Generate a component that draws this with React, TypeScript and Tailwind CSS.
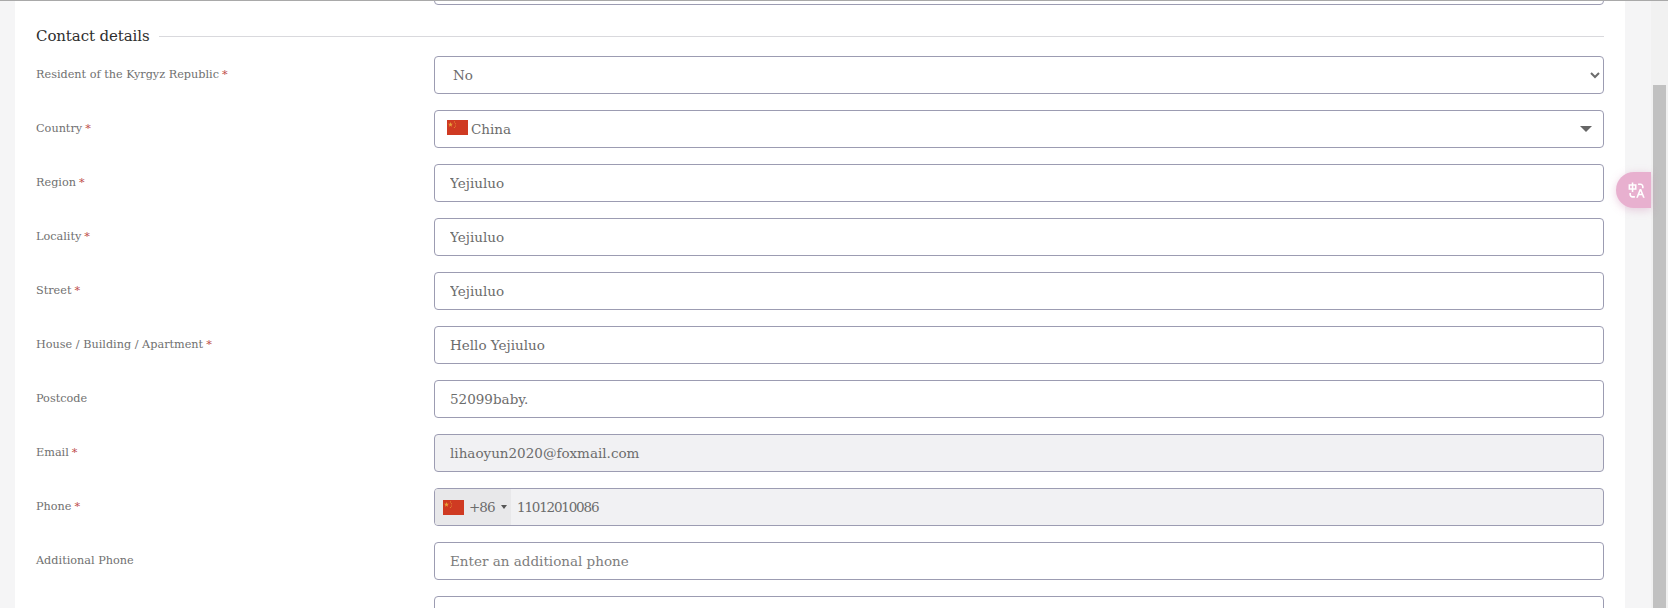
import { RiTranslate } from "react-icons/ri";

const font = "font-['DejaVu_Serif',serif]";

function Flag({ className }: { className: string }) {
  return (
    <svg viewBox="0 0 30 20" preserveAspectRatio="none" className={className}>
      <rect width="30" height="20" fill="#cf3a22" />
      <polygon points="5,2.5 5.9,5 8.5,5 6.4,6.6 7.2,9 5,7.6 2.8,9 3.6,6.6 1.5,5 4.1,5" fill="#e8a23a" />
      <circle cx="10.5" cy="2.5" r="0.7" fill="#e8a23a" />
      <circle cx="12" cy="5" r="0.7" fill="#e8a23a" />
      <circle cx="12" cy="8" r="0.7" fill="#e8a23a" />
      <circle cx="10.5" cy="10" r="0.7" fill="#e8a23a" />
    </svg>
  );
}

function Row({ label, required, children }: { label?: string; required?: boolean; children: React.ReactNode }) {
  return (
    <div className="flex h-[38px] items-start">
      <label className="w-[398px] shrink-0 pt-[11px] text-[11.25px] leading-[16px] text-[#707070]">
        {label}
        {required && <span className="ml-[3px] text-[#c0504d]">*</span>}
      </label>
      <div className="min-w-0 flex-1">{children}</div>
    </div>
  );
}

const boxBase =
  "h-[38px] w-full rounded-[4px] border border-[#9c9cb2] text-[13.5px] text-[#6c6c6c] outline-none";

function TextRow({ label, value, required, placeholder, disabled }: { label?: string; value?: string; required?: boolean; placeholder?: string; disabled?: boolean }) {
  return (
    <Row label={label} required={required}>
      <input
        readOnly
        defaultValue={value}
        placeholder={placeholder}
        className={`${boxBase} px-[15px] placeholder:text-[#7d7d7d] ${disabled ? "bg-[#f1f1f3]" : "bg-white"}`}
      />
    </Row>
  );
}

export default function App() {
  return (
    <div className={`flex h-[608px] w-full overflow-hidden bg-[#f5f5f6] ${font}`}>
      <div className="relative flex min-w-0 flex-1 flex-col border-t border-[#a9a9a9] pl-[15px] pr-[26px]">
        <main className="h-full overflow-hidden bg-white px-[21px]">
          <div className="-mt-[34px] flex flex-col">
            <TextRow />
            <div className="mt-[15px] flex h-[32px] items-center gap-[9px]">
              <h2 className="whitespace-nowrap text-[15px] tracking-[-0.1px] text-[#2e2e2e]">Contact details</h2>
              <div className="h-px flex-1 bg-[#d9d9dd]" />
            </div>
            <div className="mt-[4px] flex flex-col gap-[16px]">
              <Row label="Resident of the Kyrgyz Republic" required>
                <select defaultValue="No" className={`${boxBase} bg-white pl-[14px] pr-[3px]`}>
                  <option>No</option>
                  <option>Yes</option>
                </select>
              </Row>
              <Row label="Country" required>
                <div className={`${boxBase} flex items-center bg-white pl-[12px] pr-[11px]`}>
                  <Flag className="mb-[3px] h-[15px] w-[21px] shrink-0" />
                  <span className="ml-[3px] flex-1">China</span>
                  <span className="h-0 w-0 border-x-[6px] border-t-[6px] border-x-transparent border-t-[#666]" />
                </div>
              </Row>
              <TextRow label="Region" required value="Yejiuluo" />
              <TextRow label="Locality" required value="Yejiuluo" />
              <TextRow label="Street" required value="Yejiuluo" />
              <TextRow label="House / Building / Apartment" required value="Hello Yejiuluo" />
              <TextRow label="Postcode" value="52099baby." />
              <TextRow label="Email" required value="lihaoyun2020@foxmail.com" disabled />
              <Row label="Phone" required>
                <div className={`${boxBase} flex items-stretch overflow-hidden bg-[#f1f1f3]`}>
                  <div className="flex w-[76px] shrink-0 items-center bg-[#e8e8ea] pl-[8px]">
                    <Flag className="h-[15px] w-[21px] shrink-0" />
                    <span className="ml-[5px] tracking-[-1px]">+86</span>
                    <span className="ml-[6px] h-0 w-0 border-x-[3px] border-t-[4px] border-x-transparent border-t-[#555]" />
                  </div>
                  <span className="flex items-center pl-[6px] tracking-[-1.2px]">11012010086</span>
                </div>
              </Row>
              <TextRow label="Additional Phone" placeholder="Enter an additional phone" />
              <TextRow />
            </div>
          </div>
        </main>
        <button className="absolute right-0 top-[171px] flex h-[36px] w-[35px] items-center rounded-l-[18px] bg-[#e8b0cf] pl-[11px] text-white shadow-[0_2px_8px_rgba(200,120,170,0.35)]">
          <RiTranslate size={19} />
        </button>
      </div>
      <div className="flex w-[17px] shrink-0 flex-col border-t border-[#a9a9a9] bg-[#f1f1f1] px-[2px] pt-[84px]">
        <div className="flex-1 bg-[#c1c1c1]" />
      </div>
    </div>
  );
}
